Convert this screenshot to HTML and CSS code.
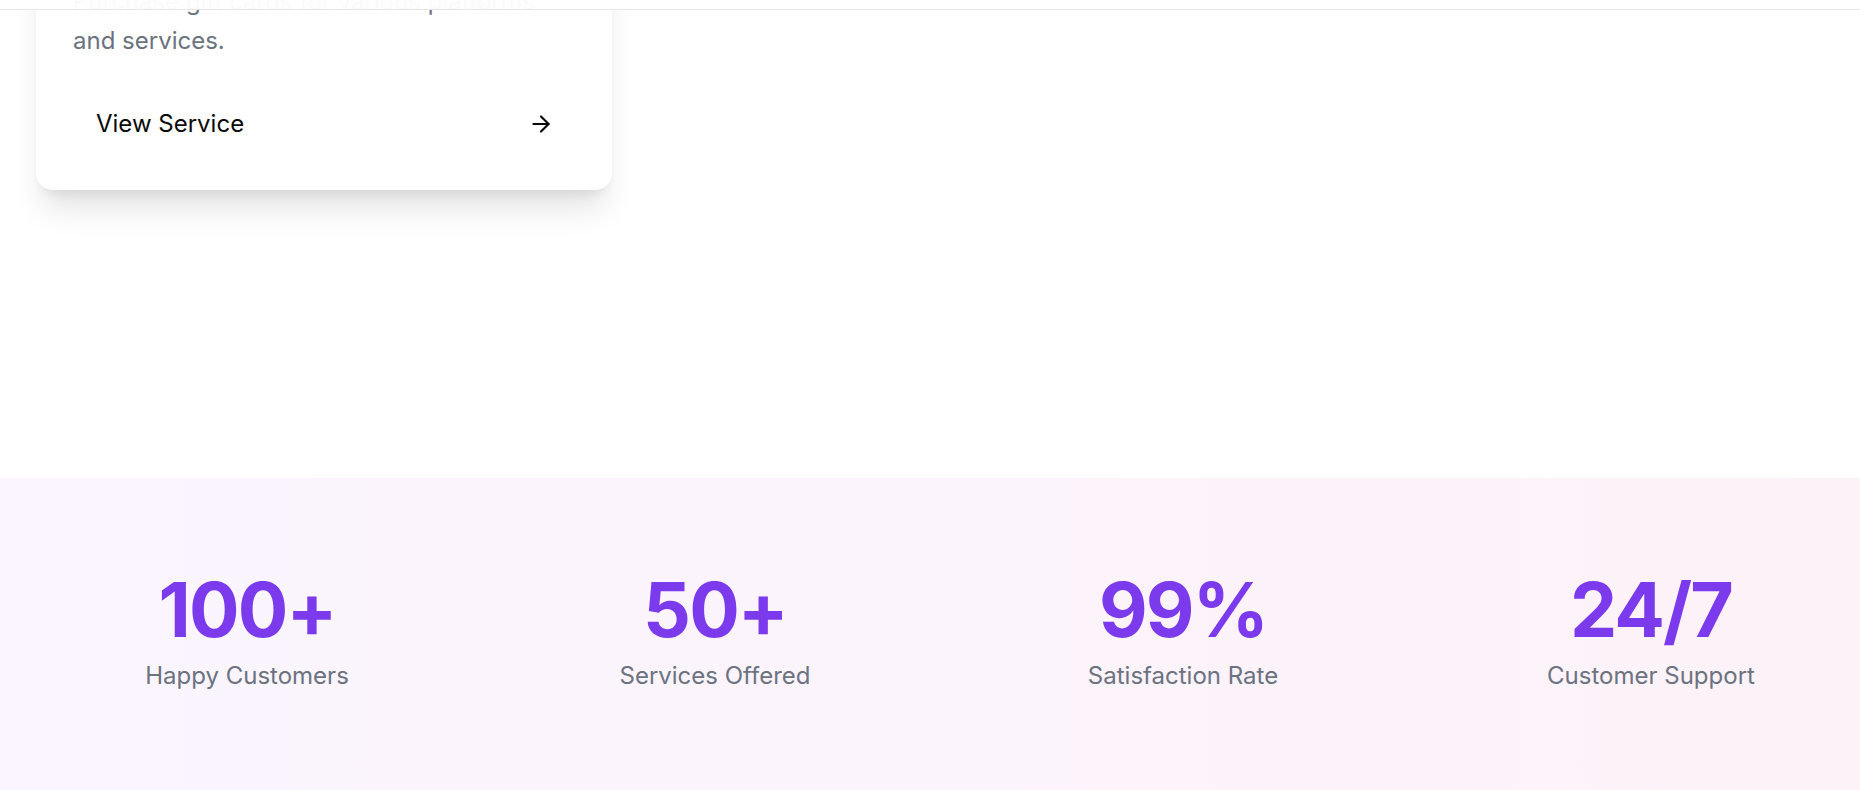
FILE: index.html
```html
<!DOCTYPE html>
<html lang="en">
<head>
<meta charset="utf-8">
<title>Services</title>
<link rel="stylesheet" href="styles.css">
</head>
<body>
<header class="topbar"></header>
<main>
  <section class="services">
    <div class="service-grid">
      <article class="card">
        <p class="card-desc">Purchase gift cards for various platforms and services.</p>
        <button class="card-btn" type="button">
          <span>View Service</span>
          <svg class="arrow" viewBox="0 0 24 24" fill="none" stroke="currentColor" stroke-width="2" stroke-linecap="round" stroke-linejoin="round"><path d="M5 12h14"/><path d="m12 5 7 7-7 7"/></svg>
        </button>
      </article>
    </div>
  </section>
  <section class="stats">
    <div class="stats-grid">
      <div class="stat"><div class="stat-num">100+</div><div class="stat-label">Happy Customers</div></div>
      <div class="stat"><div class="stat-num">50+</div><div class="stat-label">Services Offered</div></div>
      <div class="stat"><div class="stat-num">99%</div><div class="stat-label">Satisfaction Rate</div></div>
      <div class="stat"><div class="stat-num">24/7</div><div class="stat-label">Customer Support</div></div>
    </div>
  </section>
</main>
</body>
</html>
```

FILE: styles.css
```css
* { box-sizing: border-box; }
html, body { margin: 0; padding: 0; }
body {
  font-family: Inter, "Noto Sans", "Liberation Sans", sans-serif;
  background: #ffffff;
  color: #0a0a0a;
  overflow: hidden;
}
.topbar {
  position: fixed;
  top: 0;
  left: 0;
  right: 0;
  height: 10px;
  background: rgba(255, 255, 255, 0.95);
  backdrop-filter: blur(8px);
  border-bottom: 1px solid #e5e7eb;
  z-index: 10;
}
.services {
  margin-top: -55px;
  padding: 0 0 288px 36px;
}
.service-grid {
  display: grid;
  grid-template-columns: 576px;
}
.card {
  background: #ffffff;
  border-radius: 17px;
  padding: 37px 37px 41px 37px;
  box-shadow: 0 25px 31px -6px rgba(0, 0, 0, 0.1), 0 10px 13px -8px rgba(0, 0, 0, 0.1);
}
.card-desc {
  margin: 0;
  font-size: 24px;
  line-height: 39px;
  color: #6b7280;
}
.card-btn {
  margin-top: 38px;
  width: 100%;
  height: 51px;
  display: flex;
  align-items: center;
  justify-content: space-between;
  padding: 0 21px 0 23px;
  border: 0;
  background: transparent;
  font-family: inherit;
  font-size: 24px;
  color: #0a0a0a;
  cursor: pointer;
}
.arrow { width: 26px; height: 26px; }
.stats {
  background: linear-gradient(to right, #faf5ff, #fdf2f8);
  padding: 94px 0 120px 38px;
}
.stats-grid {
  display: grid;
  grid-template-columns: repeat(4, 1fr);
  column-gap: 50px;
}
.stat { text-align: center; }
.stat-num {
  font-size: 75px;
  line-height: 75px;
  font-weight: 700;
  letter-spacing: -0.025em;
  color: #7c3aed;
}
.stat-label {
  margin-top: 11px;
  font-size: 24px;
  line-height: 36px;
  color: #6b7280;
}
```
